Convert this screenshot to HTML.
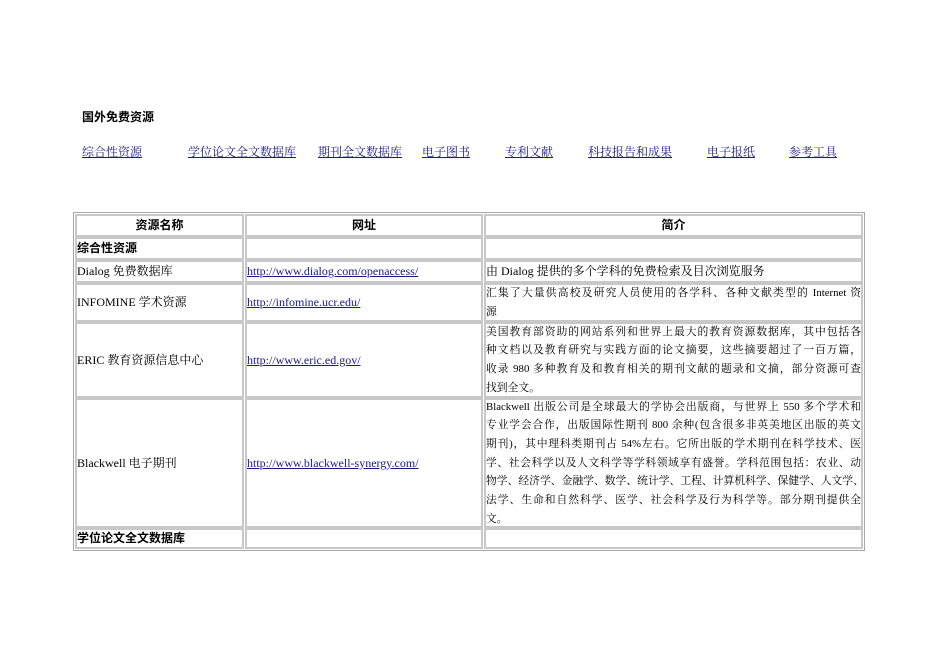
<!DOCTYPE html>
<html><head><meta charset="utf-8"><style>
body{margin:0;width:950px;height:672px;background:#fff;position:relative;font-family:"Liberation Serif","Noto Serif CJK SC","Noto Sans CJK SC",serif;font-size:12px;color:#000}
.a{position:absolute;white-space:nowrap}
a{color:#1a1a8c;text-decoration:underline}
.b{font-family:"Liberation Sans","Noto Sans CJK SC",sans-serif;font-weight:bold}
.c{position:absolute;box-sizing:border-box;border:2px solid #c8c8c8;padding:0;display:flex;align-items:center;line-height:18.7px;white-space:nowrap;overflow:hidden}
.ctr{justify-content:center}
.t{position:absolute;left:73px;top:212px;width:792px;height:339px;border:1px solid #a8a8a8;box-sizing:border-box}
.w>div{width:100%}
.w span{display:block;text-align:justify;text-align-last:justify;white-space:nowrap;font-size:10.8px;height:18.7px}
.w span.l{text-align-last:left}
</style></head><body>
<div class="a b" style="left:82px;top:108px">国外免费资源</div>
<div class="a" style="left:82px;top:143px"><a>综合性资源</a></div>
<div class="a" style="left:188px;top:143px"><a>学位论文全文数据库</a></div>
<div class="a" style="left:318px;top:143px"><a>期刊全文数据库</a></div>
<div class="a" style="left:422px;top:143px"><a>电子图书</a></div>
<div class="a" style="left:505px;top:143px"><a>专利文献</a></div>
<div class="a" style="left:588px;top:143px"><a>科技报告和成果</a></div>
<div class="a" style="left:707px;top:143px"><a>电子报纸</a></div>
<div class="a" style="left:789px;top:143px"><a>参考工具</a></div>

<div class="t"></div>
<div class="c ctr b" style="left:75px;top:214px;width:169px;height:23px">资源名称</div>
<div class="c ctr b" style="left:245px;top:214px;width:238px;height:23px">网址</div>
<div class="c ctr b" style="left:484px;top:214px;width:379px;height:23px">简介</div>

<div class="c b" style="left:75px;top:237px;width:169px;height:23px">综合性资源</div>
<div class="c" style="left:245px;top:237px;width:238px;height:23px"></div>
<div class="c" style="left:484px;top:237px;width:379px;height:23px"></div>

<div class="c" style="left:75px;top:260px;width:169px;height:23px">Dialog 免费数据库</div>
<div class="c" style="left:245px;top:260px;width:238px;height:23px"><a>http://www.dialog.com/openaccess/</a></div>
<div class="c" style="left:484px;top:260px;width:379px;height:23px">由 Dialog 提供的多个学科的免费检索及目次浏览服务</div>

<div class="c" style="left:75px;top:283px;width:169px;height:39px">INFOMINE 学术资源</div>
<div class="c" style="left:245px;top:283px;width:238px;height:39px"><a>http://infomine.ucr.edu/</a></div>
<div class="c w" style="left:484px;top:283px;width:379px;height:39px"><div><span>汇集了大量供高校及研究人员使用的各学科、各种文献类型的 Internet 资</span><span class="l">源</span></div></div>

<div class="c" style="left:75px;top:322px;width:169px;height:76px">ERIC 教育资源信息中心</div>
<div class="c" style="left:245px;top:322px;width:238px;height:76px"><a>http://www.eric.ed.gov/</a></div>
<div class="c w" style="left:484px;top:322px;width:379px;height:76px"><div><span>美国教育部资助的网站系列和世界上最大的教育资源数据库，其中包括各</span><span>种文档以及教育研究与实践方面的论文摘要，这些摘要超过了一百万篇，</span><span>收录 980 多种教育及和教育相关的期刊文献的题录和文摘，部分资源可查</span><span class="l">找到全文。</span></div></div>

<div class="c" style="left:75px;top:398px;width:169px;height:130px">Blackwell 电子期刊</div>
<div class="c" style="left:245px;top:398px;width:238px;height:130px"><a>http://www.blackwell-synergy.com/</a></div>
<div class="c w" style="left:484px;top:398px;width:379px;height:130px"><div><span>Blackwell 出版公司是全球最大的学协会出版商，与世界上 550 多个学术和</span><span>专业学会合作，出版国际性期刊 800 余种(包含很多非英美地区出版的英文</span><span>期刊)，其中理科类期刊占 54%左右。它所出版的学术期刊在科学技术、医</span><span>学、社会科学以及人文科学等学科领域享有盛誉。学科范围包括：农业、动</span><span>物学、经济学、金融学、数学、统计学、工程、计算机科学、保健学、人文学、</span><span>法学、生命和自然科学、医学、社会科学及行为科学等。部分期刊提供全</span><span class="l">文。</span></div></div>

<div class="c b" style="left:75px;top:528px;width:169px;height:21px">学位论文全文数据库</div>
<div class="c" style="left:245px;top:528px;width:238px;height:21px"></div>
<div class="c" style="left:484px;top:528px;width:379px;height:21px"></div>
</body></html>
